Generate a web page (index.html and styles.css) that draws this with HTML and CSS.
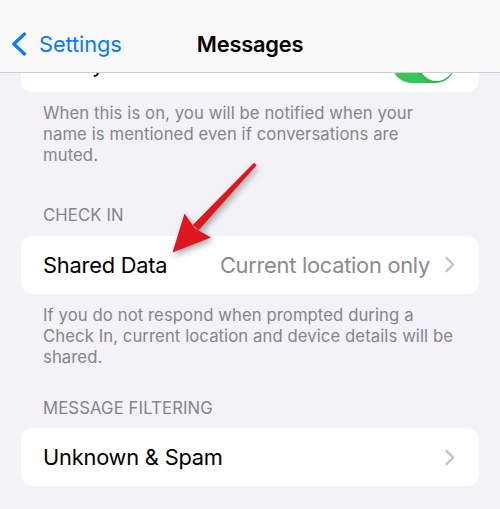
FILE: index.html
```html
<!DOCTYPE html>
<html lang="en">
<head>
<meta charset="utf-8">
<title>Messages</title>
<link rel="stylesheet" href="styles.css">
</head>
<body>
<div class="screen">
  <header class="nav">
    <div class="back">
      <svg class="back-chevron" width="16" height="24" viewBox="0 0 16 24"><path d="M13.5 2 L2.8 12 L13.5 22" fill="none" stroke="#0A7AFF" stroke-width="3.2" stroke-linecap="round" stroke-linejoin="round"/></svg>
      <span class="back-label">Settings</span>
    </div>
    <h1 class="title">Messages</h1>
    <div class="nav-spacer"></div>
  </header>

  <div class="card card-cut">
    <div class="row row-cut">
      <span class="label">Notify Me</span>
      <span class="toggle"><span class="knob"></span></span>
    </div>
  </div>
  <p class="footer footer-first">When this is on, you will be notified when your<br>name is mentioned even if conversations are<br>muted.</p>

  <h2 class="section-header header-first">CHECK IN</h2>
  <div class="card">
    <div class="row">
      <span class="label">Shared Data</span>
      <span class="value">Current location only</span>
      <svg class="chevron" width="12" height="17" viewBox="0 0 12 17"><path d="M2.5 1.8 L9.2 8.5 L2.5 15.2" fill="none" stroke="#C4C4C7" stroke-width="2.4" stroke-linecap="round" stroke-linejoin="round"/></svg>
    </div>
  </div>
  <p class="footer footer-second">If you do not respond when prompted during a<br>Check In, current location and device details will be<br>shared.</p>

  <h2 class="section-header header-second">MESSAGE FILTERING</h2>
  <div class="card card-last">
    <div class="row">
      <span class="label">Unknown &amp; Spam</span>
      <svg class="chevron" width="12" height="17" viewBox="0 0 12 17"><path d="M2.5 1.8 L9.2 8.5 L2.5 15.2" fill="none" stroke="#C4C4C7" stroke-width="2.4" stroke-linecap="round" stroke-linejoin="round"/></svg>
    </div>
  </div>

  <svg class="arrow" width="500" height="509" viewBox="0 0 500 509">
    <polygon points="256.6,165.2 254.0,162.8 192.8,225.0 198.6,230.3" fill="#E0161E"/>
    <polygon points="172.5,252.5 184.5,213.5 194.8,228.2 211,237.5" fill="#E0161E"/>
  </svg>
</div>
</body>
</html>
```
FILE: styles.css
```css
* { box-sizing: border-box; }

html, body {
  margin: 0;
  padding: 0;
  background: #F2F2F7;
}

body {
  font-family: Inter, "Noto Sans", "Liberation Sans", sans-serif;
  color: #000;
  -webkit-font-smoothing: antialiased;
}

.screen {
  position: relative;
  width: 500px;
  height: 509px;
  overflow: hidden;
}

.nav {
  height: 73px;
  padding-top: 16px;
  background: #F8F8F8;
  border-bottom: 1px solid #CDCDD0;
  display: grid;
  grid-template-columns: 1fr auto 1fr;
  align-items: center;
}

.back {
  display: flex;
  align-items: center;
  padding-left: 11px;
  gap: 12px;
  height: 56px;
}

.back-chevron { display: block; flex: none; }

.back-label {
  font-size: 21.8px;
  color: #0A7AFF;
  letter-spacing: -0.1px;
}

.title {
  margin: 0;
  font-size: 21.8px;
  font-weight: 600;
  letter-spacing: -0.2px;
}

.card {
  margin: 0 21px;
  background: #fff;
  border-radius: 12px;
  overflow: hidden;
}

.card-cut {
  height: 19px;
  border-radius: 0 0 12px 12px;
  display: flex;
  flex-direction: column;
  justify-content: flex-end;
}

.row {
  height: 58px;
  display: flex;
  align-items: center;
  padding: 0 23px 0 22px;
  flex: none;
}

.row-cut {
  height: 57px;
  padding-right: 24px;
}

.label {
  flex: 1;
  font-size: 21.8px;
  letter-spacing: -0.2px;
  white-space: nowrap;
}

.value {
  font-size: 21.8px;
  color: #8A8A8E;
  letter-spacing: -0.25px;
  white-space: nowrap;
}

.chevron {
  display: block;
  flex: none;
  margin-left: 14px;
}

.toggle {
  position: relative;
  width: 63px;
  height: 39px;
  border-radius: 20px;
  background: #34C759;
  flex: none;
}

.knob {
  position: absolute;
  top: 2px;
  right: 1.5px;
  width: 35px;
  height: 35px;
  border-radius: 50%;
  background: #fff;
  box-shadow: 0 2px 5px rgba(0,0,0,0.12);
}

.footer {
  margin: 11px 0 0;
  padding: 0 10px 0 43px;
  font-size: 16.7px;
  line-height: 21px;
  color: #85858B;
  letter-spacing: 0.08px;
  white-space: nowrap;
}

.footer-first { margin-top: 11.4px; }

.section-header {
  margin: 0;
  padding-left: 43px;
  font-size: 16.7px;
  line-height: 21px;
  font-weight: 400;
  color: #85858B;
  letter-spacing: 0.12px;
}

.header-first { margin-top: 39px; margin-bottom: 9.6px; }
.header-second { margin-top: 30.4px; margin-bottom: 9px; }

.arrow {
  position: absolute;
  left: 0;
  top: 0;
  pointer-events: none;
  filter: drop-shadow(2px 3px 3px rgba(0,0,0,0.35));
}
```
